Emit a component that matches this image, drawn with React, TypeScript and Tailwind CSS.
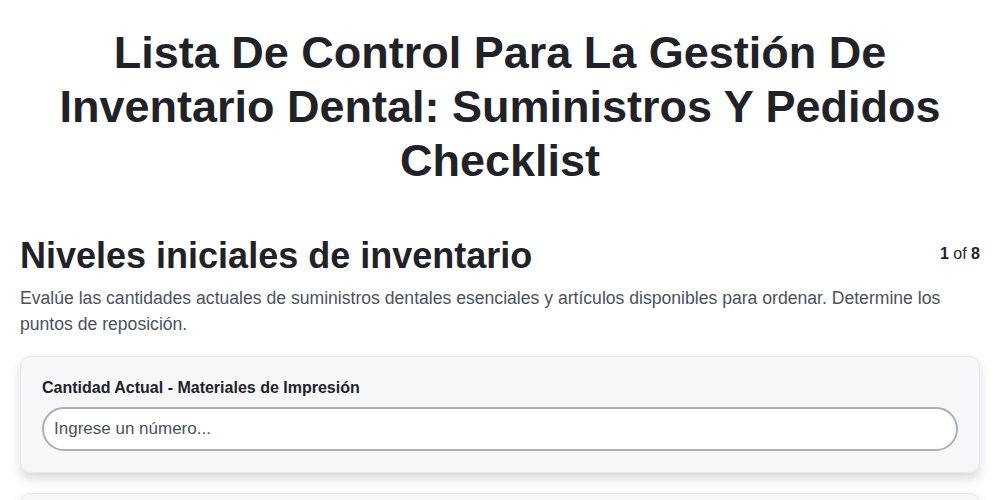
export default function App() {
  return (
    <div className="min-h-screen bg-white text-[#1f2329] font-['Liberation_Sans',Arial,sans-serif]">
      <div className="mx-auto w-[960px] pt-[26px]">
        <h1 className="text-center text-[45px] font-bold leading-[54px] px-[30px]">
          Lista De Control Para La Gestión De Inventario Dental: Suministros Y Pedidos Checklist
        </h1>

        <div className="mt-[46px] flex items-start justify-between">
          <h2 className="text-[36px] font-bold leading-[44px]">Niveles iniciales de inventario</h2>
          <div className="mt-[8px] text-[16px] text-[#1f2329]">
            <span className="font-bold">1</span> of <span className="font-bold">8</span>
          </div>
        </div>
        <p className="mt-[7px] text-[17.6px] leading-[26px] text-[#4a5260]">
          Evalúe las cantidades actuales de suministros dentales esenciales y artículos disponibles para ordenar. Determine los puntos de reposición.
        </p>

        <div className="mt-[19px] flex flex-col gap-[20px]">
          <div className="rounded-[10px] border border-[#e6e8eb] bg-[#f6f7f9] px-[21px] pt-[21px] pb-[21px] shadow-[0_6px_12px_rgba(0,0,0,0.15)]">
            <label className="block text-[16px] font-bold leading-[20px] text-[#1f2329]">
              Cantidad Actual - Materiales de Impresión
            </label>
            <input
              type="text"
              placeholder="Ingrese un número..."
              className="mt-[9px] block h-[44px] w-full rounded-[22px] border-2 border-[#a9b0b8] bg-white px-[10px] text-[17px] text-[#1f2329] placeholder:text-[#4a5260] outline-none"
            />
          </div>
          <div className="h-[100px] rounded-[10px] border border-[#e6e8eb] bg-[#f6f7f9] shadow-[0_6px_12px_rgba(0,0,0,0.15)]" />
        </div>
      </div>
    </div>
  );
}
